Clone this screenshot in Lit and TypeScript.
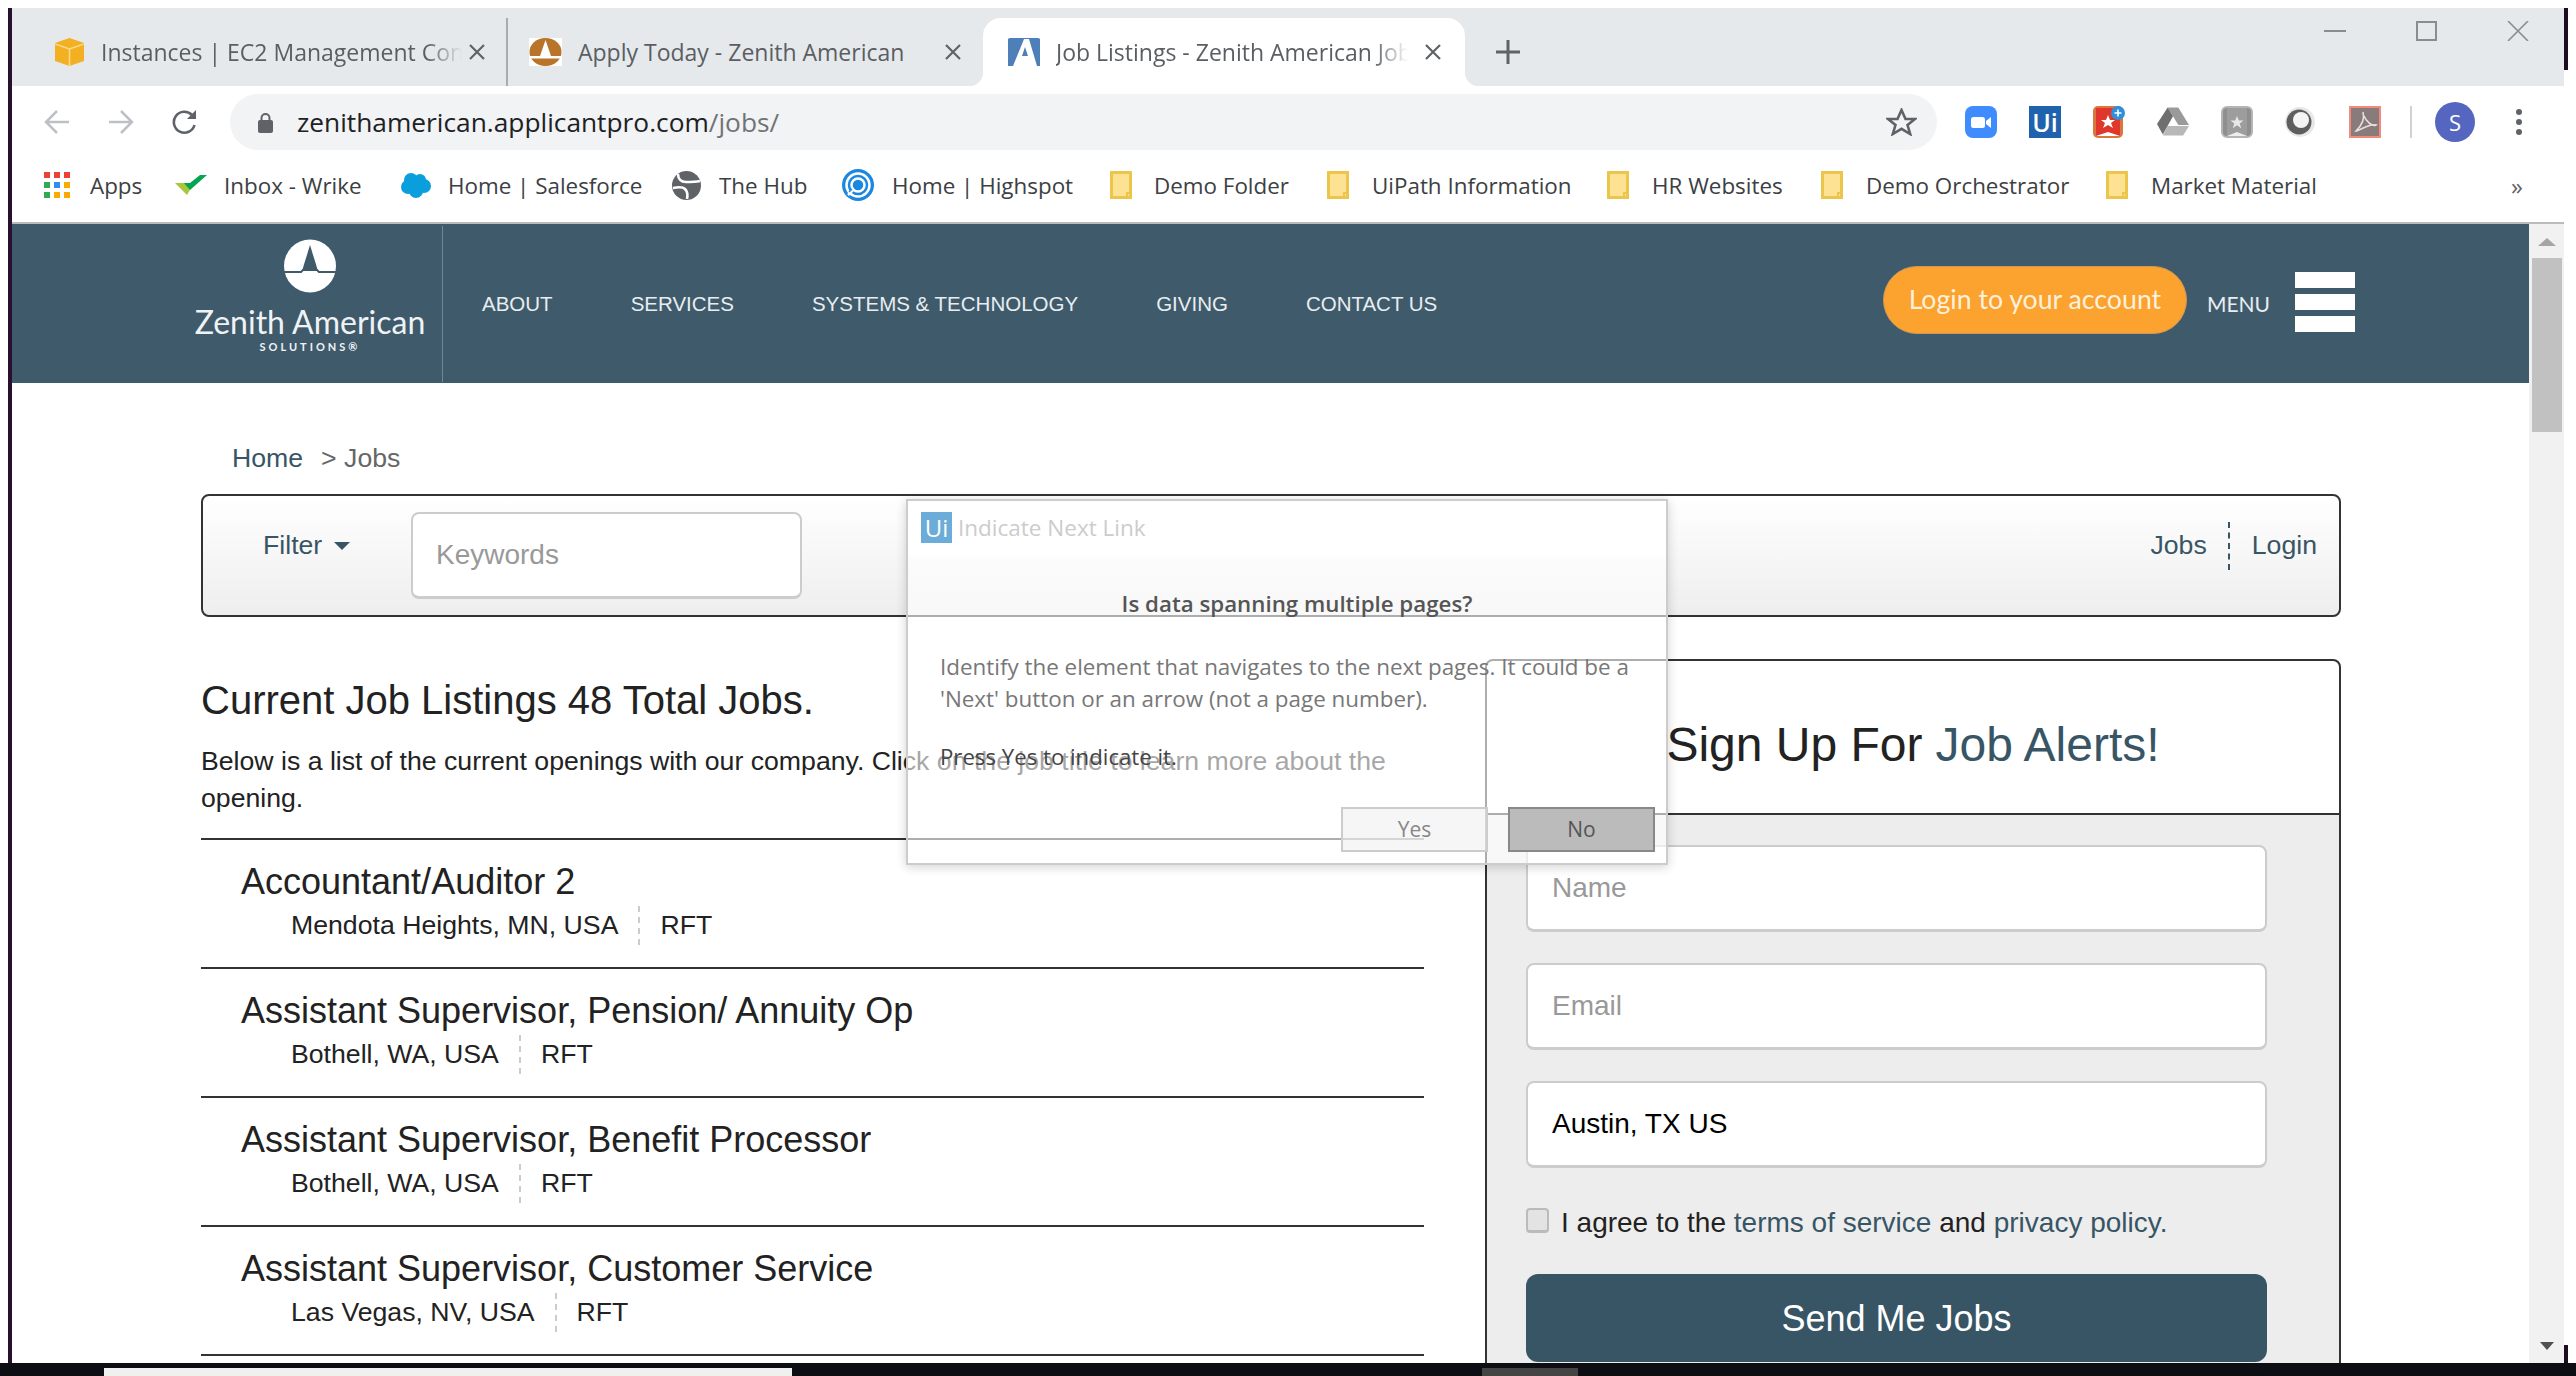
import { LitElement, css, html, svg } from 'lit';
import { customElement } from 'lit/decorators.js';

const folder = html`<svg width="22" height="28" viewBox="0 0 22 28"><path d="M1.5 1.5h19v25h-19z" fill="#fde293" stroke="#ecc64a" stroke-width="3"/><path d="M17 27v-5h3" fill="none" stroke="#ecc64a" stroke-width="2"/></svg>`;

const appsGrid = html`<svg width="26" height="26" viewBox="0 0 26 26">
  ${[
    ['#ea4335', '#ea4335', '#ea4335'],
    ['#34a853', '#2f8cf0', '#f9ab00'],
    ['#34a853', '#f9ab00', '#f9ab00'],
  ].map((row, y) => row.map((c, x) => svg`<rect x=${x * 10} y=${y * 10} width="6" height="6" fill=${c} />`))}
</svg>`;

const wrike = html`<svg width="32" height="20" viewBox="0 0 32 20"><path d="M0 8h11l5 5-4 7z" fill="#a8c73b"/><path d="M9 8l6 0 10-8h7L15 15z" fill="#00a650"/></svg>`;
const salesforce = html`<svg width="32" height="28" viewBox="0 0 32 28"><g fill="#0a9fdc"><circle cx="11" cy="9" r="7"/><circle cx="20" cy="9" r="6"/><circle cx="24" cy="15" r="7"/><circle cx="8" cy="16" r="7"/><circle cx="16" cy="20" r="7"/></g></svg>`;
const hub = html`<svg width="29" height="29" viewBox="0 0 29 29"><circle cx="14.500" cy="14.500" r="14.500" fill="#5f6368"/><path d="M6 3c0 5 3 8 8 8 5 0 9 0 14-1M1 17c5-1 10-1 12 1 2 2 3 5 2 10" fill="none" stroke="#fff" stroke-width="2.600"/></svg>`;
const highspot = html`<svg width="32" height="32" viewBox="0 0 32 32"><circle cx="16" cy="16" r="16" fill="#1b87e0"/><circle cx="16" cy="16" r="11.500" fill="none" stroke="#fff" stroke-width="2.500"/><circle cx="16" cy="16" r="6.500" fill="none" stroke="#fff" stroke-width="2.500"/><path d="M11 21l-5 5" stroke="#fff" stroke-width="2.500"/><path d="M10 20l-3 3" stroke="#1b87e0" stroke-width="1.500"/></svg>`;

const zoom = html`<svg width="32" height="32" viewBox="0 0 32 32"><rect width="32" height="32" rx="8" fill="#3f8cff"/><rect x="6" y="11" width="14" height="11" rx="2.5" fill="#fff"/><path d="M21 15l5-4v11l-5-4z" fill="#fff"/></svg>`;
const uiExt = html`<div class="ext-ui">Ui</div>`;
const wunder = html`<svg width="32" height="32" viewBox="0 0 32 32"><rect width="30" height="32" y="0" rx="5" fill="#d9773e"/><rect x="3" y="2" width="24" height="28" fill="#e0362c"/><path d="M15 9l2 5h5l-4 3 2 5-5-3-5 3 2-5-4-3h5z" fill="#fff"/><path d="M3 30l12-4 12 4z" fill="#fff"/><circle cx="25" cy="7" r="7" fill="#2f8fdc"/><path d="M25 3.500v7M21.500 7h7" stroke="#fff" stroke-width="1.600"/></svg>`;
const drive = html`<svg width="33" height="30" viewBox="0 0 33 30"><path d="M11 0h11l11 18h-11z" fill="#9a9a9a"/><path d="M11 0l5.500 9L6 28 0 17z" fill="#6f6f6f"/><path d="M6 29l5-10h22l-6 10z" fill="#b8b8b8"/></svg>`;
const bookmark = html`<svg width="32" height="32" viewBox="0 0 32 32"><rect x="1" y="1" width="30" height="30" rx="5" fill="#8f8f8f" stroke="#b5b5b5" stroke-width="2"/><rect x="6" y="2" width="20" height="28" fill="#9d9d9d"/><path d="M16 10l1.800 4.500h4.700l-3.800 3 1.500 4.700-4.200-3-4.200 3 1.500-4.700-3.800-3h4.700z" fill="#e8e8e8"/><path d="M6 30l10-4 10 4z" fill="#eee"/></svg>`;
const ring = html`<svg width="32" height="32" viewBox="0 0 32 32"><circle cx="15" cy="16" r="15" fill="#e8e8e8"/><circle cx="14" cy="16" r="12.500" fill="#5e5e5e"/><circle cx="16" cy="14" r="8" fill="#f4f4f4"/></svg>`;
const pdf = html`<svg width="32" height="32" viewBox="0 0 32 32"><rect x="1" y="1" width="30" height="30" fill="#8a7b7b" stroke="#f28b7d" stroke-width="2"/><path d="M14 6c2 7-2 14-7 19 3 0 14-8 20-6-4 2-10-4-12-9" fill="none" stroke="#e6e0e0" stroke-width="1.600"/></svg>`;

const tabClose = html`<svg class="tab-x" width="18" height="16" viewBox="0 0 18 16"><path d="M2 1l14 14M16 1 2 15" stroke="#5f6368" stroke-width="2.200"/></svg>`;

const tabs = [
  {
    cls: 'tab-a',
    title: 'Instances | EC2 Management Console',
    icon: html`<svg width="29" height="28" viewBox="0 0 29 28"><path d="M14.500 0 29 5v18l-14.500 5L0 23V5z" fill="#f4b023"/><path d="M0 6l14.500 5L29 6M14.500 11v17" fill="none" stroke="#fbd98a" stroke-width="1.500"/></svg>`,
  },
  {
    cls: 'tab-b',
    title: 'Apply Today - Zenith American',
    icon: html`<svg width="33" height="28" viewBox="0 0 33 28"><rect width="33" height="28" fill="#fff"/><ellipse cx="16.500" cy="14" rx="16" ry="14" fill="#b87428"/><path d="M16.500 2 22 18H11z" fill="#fff"/><rect y="18" width="33" height="2.500" fill="#fff"/></svg>`,
  },
  {
    cls: 'tab-c',
    title: 'Job Listings - Zenith American Job Listings',
    icon: html`<svg width="32" height="28" viewBox="0 0 32 28"><rect width="32" height="28" rx="2" fill="#4f7fb8"/><path d="M16 1h5l8 27H5z" fill="#fff"/><path d="M17 9l3 9h-6z" fill="#4f7fb8"/><path d="M4 28 14 1H0v27zM30 28 22 1h10v27z" fill="#4f7fb8"/></svg>`,
  },
];

const extensions = [zoom, uiExt, wunder, drive, bookmark, ring, pdf];

// x is the left edge of the item in the window, offset is where its label starts
const bookmarks = [
  { x: 44, offset: 46, label: 'Apps', icon: appsGrid },
  { x: 175, offset: 49, label: 'Inbox - Wrike', icon: wrike },
  { x: 400, offset: 48, label: 'Home | Salesforce', icon: salesforce },
  { x: 672, offset: 47, label: 'The Hub', icon: hub },
  { x: 842, offset: 50, label: 'Home | Highspot', icon: highspot },
  { x: 1110, offset: 44, label: 'Demo Folder', icon: folder },
  { x: 1327, offset: 45, label: 'UiPath Information', icon: folder },
  { x: 1607, offset: 45, label: 'HR Websites', icon: folder },
  { x: 1821, offset: 45, label: 'Demo Orchestrator', icon: folder },
  { x: 2106, offset: 45, label: 'Market Material', icon: folder },
];

const navLinks = ['ABOUT', 'SERVICES', 'SYSTEMS & TECHNOLOGY', 'GIVING', 'CONTACT US'];

const jobs = [
  { title: 'Accountant/Auditor 2', place: 'Mendota Heights, MN, USA' },
  { title: 'Assistant Supervisor, Pension/ Annuity Op', place: 'Bothell, WA, USA' },
  { title: 'Assistant Supervisor, Benefit Processor', place: 'Bothell, WA, USA' },
  { title: 'Assistant Supervisor, Customer Service', place: 'Las Vegas, NV, USA' },
];

@customElement('app-root')
export class AppRoot extends LitElement {
  static override styles = css`
    :host {
      display: block;
      width: 2576px;
      height: 1376px;
      overflow: hidden;
      font-family: 'Liberation Sans', Arial, sans-serif;
      color: #222;
    }

    .screen {
      position: relative;
      display: flex;
      flex-direction: column;
      height: 100%;
      background: #fff;
    }

    .top-strip {
      flex: 0 0 8px;
      background: #fff;
    }

    .middle {
      flex: 1 1 auto;
      min-height: 0;
      display: flex;
    }

    .edge-left {
      flex: 0 0 12px;
      box-sizing: border-box;
      background: #fff;
      border-left: 8px solid #fff;
      border-right: 4px solid #2a1030;
    }

    .edge-right {
      flex: 0 0 12px;
      display: flex;
      flex-direction: column;
      background: #fff;
    }

    .edge-right i {
      display: block;
      width: 4px;
      height: 62px;
      background: #1c0d20;
    }

    .edge-right i:last-child {
      height: 18px;
      margin-top: auto;
    }

    .window {
      flex: 1 1 auto;
      min-width: 0;
      display: flex;
      flex-direction: column;
      background: #fff;
    }

    .taskbar {
      flex: 0 0 13px;
      display: flex;
      background: #0c0e13;
    }

    .task-a,
    .task-b {
      height: 8px;
      margin-top: 5px;
    }

    .task-a {
      width: 688px;
      margin-left: 104px;
      background: #f0f0f0;
    }

    .task-b {
      width: 96px;
      margin-left: 690px;
      background: #444;
    }

    /* tab strip */
    .tabstrip {
      flex: 0 0 78px;
      display: flex;
      align-items: flex-end;
      background: #e6e9ec;
      font-family: 'Open Sans', sans-serif;
      font-size: 23px;
      color: #5a5e63;
    }

    .tab {
      position: relative;
      box-sizing: border-box;
      height: 68px;
      display: flex;
      align-items: center;
    }

    .tab svg {
      flex: none;
    }

    .tab-title {
      overflow: hidden;
      white-space: nowrap;
      -webkit-mask-image: linear-gradient(to right, #000 90%, transparent);
      mask-image: linear-gradient(to right, #000 90%, transparent);
    }

    .tab-a {
      width: 496px;
      padding-left: 43px;
      border-right: 2px solid #a9acaf;
    }

    .tab-a .tab-title {
      width: 361px;
      margin: 0 6px 0 17px;
    }

    .tab-b {
      width: 475px;
      padding-left: 21px;
    }

    .tab-b .tab-title {
      width: 360px;
      margin: 0 6px 0 16px;
      -webkit-mask-image: none;
      mask-image: none;
    }

    .tab-c {
      width: 482px;
      padding-left: 25px;
      background: #fff;
      border-radius: 18px 18px 0 0;
    }

    .tab-c .tab-title {
      width: 352px;
      margin: 0 16px 0 16px;
    }

    .tab-c::before,
    .tab-c::after {
      content: '';
      position: absolute;
      bottom: 0;
      width: 14px;
      height: 14px;
    }

    .tab-c::before {
      left: -14px;
      background: radial-gradient(circle at 0 0, #e6e9ec 14px, #fff 14.5px);
    }

    .tab-c::after {
      right: -14px;
      background: radial-gradient(circle at 100% 0, #e6e9ec 14px, #fff 14.5px);
    }

    .new-tab {
      flex: none;
      margin: 0 0 22px 31px;
    }

    .win-controls {
      align-self: flex-start;
      display: flex;
      gap: 70px;
      margin: 13px 35px 0 auto;
    }

    /* toolbar */
    .toolbar {
      flex: 0 0 76px;
      box-sizing: border-box;
      display: flex;
      align-items: center;
      height: 76px;
      padding: 0 0 4px 32px;
    }

    .nav-arrow {
      flex: none;
      margin-right: 38px;
    }

    .reload {
      flex: none;
      margin-right: 33px;
    }

    .address {
      flex: 0 0 1707px;
      height: 56px;
      box-sizing: border-box;
      display: flex;
      align-items: center;
      padding: 0 20px 0 28px;
      background: #f1f3f4;
      border-radius: 28px;
    }

    .url {
      flex: 1 1 auto;
      margin-left: 24px;
      font-family: 'Open Sans', sans-serif;
      font-size: 26.300px;
      color: #202124;
    }

    .url span {
      color: #6f7377;
    }

    .extensions {
      display: flex;
      align-items: center;
      gap: 32px;
      margin-left: 28px;
    }

    .extensions > * {
      flex: none;
      width: 32px;
      display: flex;
      justify-content: center;
    }

    .ext-ui {
      box-sizing: border-box;
      height: 32px;
      background: #1f63ae;
      color: #fff;
      font: 600 25px/32px 'Open Sans', sans-serif;
      text-align: center;
    }

    .tool-sep {
      flex: none;
      width: 2px;
      height: 32px;
      margin-left: 29px;
      background: #cfd1d3;
    }

    .avatar {
      flex: none;
      width: 40px;
      height: 40px;
      margin-left: 23px;
      border-radius: 50%;
      background: #5566c0;
      color: #fff;
      font: 22px/40px 'Open Sans', sans-serif;
      text-align: center;
    }

    .kebab {
      flex: none;
      margin-left: 41px;
    }

    /* bookmarks */
    .bookmarks {
      flex: 0 0 62px;
      box-sizing: border-box;
      display: flex;
      align-items: center;
      padding: 0 0 14px 32px;
      font-family: 'Open Sans', sans-serif;
      font-size: 22.400px;
      color: #3c4043;
      border-bottom: 2px solid #bbb;
      white-space: nowrap;
    }

    .bm {
      flex: none;
      display: flex;
      align-items: center;
    }

    .bm-icon {
      flex: none;
      display: flex;
    }

    .bm-more {
      flex: none;
      font-size: 24px;
      margin-left: 6px;
      color: #5f6368;
    }

    /* page */
    .page {
      flex: 1 1 auto;
      min-height: 0;
      display: flex;
    }

    .content {
      flex: 1 1 auto;
      min-width: 0;
      overflow: hidden;
    }

    .scrollbar {
      flex: 0 0 35px;
      display: flex;
      flex-direction: column;
      align-items: center;
      background: #f1f1f1;
    }

    .scroll-up {
      margin-top: 14px;
    }

    .scroll-thumb {
      width: 30px;
      height: 174px;
      margin-top: 12px;
      background: #c1c1c1;
    }

    .scroll-down {
      margin-top: auto;
      margin-bottom: 13px;
    }

    .site-header {
      height: 159px;
      box-sizing: border-box;
      display: flex;
      align-items: center;
      padding: 0 174px 0 183px;
      background: #3f5b6b;
      color: #e8edf0;
    }

    .logo {
      flex: 0 0 230px;
      min-width: 0;
      align-self: flex-start;
      padding-top: 15px;
      display: flex;
      flex-direction: column;
      align-items: center;
      color: #f0f3f5;
    }

    .logo-name {
      font: 400 32px/40px Lato, sans-serif;
      white-space: nowrap;
      margin-top: 9px;
    }

    .logo-sub {
      font: 700 11px/14px Lato, sans-serif;
      letter-spacing: 3px;
      margin-top: -2px;
    }

    .header-rule {
      flex: none;
      width: 1px;
      height: 156px;
      margin-left: 17px;
      background: #6f8694;
    }

    .site-nav {
      display: flex;
      gap: 78px;
      margin-left: 39px;
      font-size: 20.500px;
      white-space: nowrap;
    }

    .login-pill {
      flex: none;
      width: 304px;
      height: 68px;
      box-sizing: border-box;
      margin: -7px 0 0 auto;
      border: 1px solid #c9975a;
      border-radius: 34px;
      background: #fca22e;
      color: #fdf1dd;
      font: 26.700px/64px Lato, sans-serif;
      text-align: center;
    }

    .menu-label {
      flex: none;
      margin-left: 20px;
      font: 21px/26px Lato, sans-serif;
    }

    .burger {
      flex: none;
      display: flex;
      flex-direction: column;
      gap: 6px;
      margin: -3px 0 0 25px;
    }

    .burger i {
      display: block;
      width: 60px;
      height: 16px;
      background: #fff;
    }

    .main {
      padding: 57px 188px 0 189px;
    }

    .crumbs {
      padding-left: 31px;
      font-size: 26.670px;
      line-height: 37px;
      color: #385565;
    }

    .crumbs span {
      margin-left: 18px;
      color: #666;
    }

    .filter-bar {
      box-sizing: border-box;
      height: 123px;
      margin-top: 17px;
      display: flex;
      align-items: center;
      padding: 0 22px 0 60px;
      border: 2px solid #333;
      border-radius: 8px;
      background: linear-gradient(#fff, #eee);
      font-size: 26.670px;
      color: #385565;
    }

    .filter {
      flex: 0 0 148px;
      display: flex;
      align-items: center;
      gap: 12px;
      margin-top: -20px;
    }

    .caret {
      width: 0;
      height: 0;
      border: 8px solid transparent;
      border-top-color: #385565;
      border-bottom: 0;
    }

    .field {
      box-sizing: border-box;
      display: flex;
      align-items: center;
      background: #fff;
      border: 2px solid #ccc;
      border-bottom-width: 3px;
      border-radius: 8px;
      font-size: 28px;
      color: #999;
    }

    .field.keywords {
      width: 391px;
      height: 87px;
      padding-left: 23px;
    }

    .bar-links {
      display: flex;
      align-items: center;
      margin: -20px 0 0 auto;
    }

    .bar-links i {
      width: 0;
      height: 48px;
      margin: 0 22px 0 21px;
      border-left: 2px dashed #385565;
    }

    .columns {
      display: flex;
      gap: 61px;
      margin-top: 42px;
    }

    .listing {
      flex: 0 0 1223px;
    }

    .listing h1 {
      margin: 18px 0 20px;
      font-size: 40px;
      font-weight: 400;
      line-height: 46px;
    }

    .listing p {
      margin: 0 0 21px;
      font-size: 26.670px;
      line-height: 37px;
    }

    .job {
      box-sizing: border-box;
      height: 129px;
      padding: 18px 0 0 40px;
      border-top: 2px solid #333;
    }

    .job:last-child {
      height: 131px;
      border-bottom: 2px solid #333;
    }

    .job h2 {
      margin: 0;
      font-size: 36px;
      font-weight: 400;
      line-height: 48px;
    }

    .job-meta {
      display: flex;
      align-items: center;
      height: 39px;
      padding-left: 50px;
      font-size: 26.670px;
    }

    .job-meta span {
      line-height: 39px;
    }

    .job-meta .place {
      padding-right: 20px;
      border-right: 2px dashed #ccc;
    }

    .job-meta .kind {
      padding-left: 20px;
    }

    .signup {
      flex: 0 0 856px;
      box-sizing: border-box;
      border: 2px solid #333;
      border-radius: 8px 8px 0 0;
    }

    .signup-head {
      height: 154px;
      box-sizing: border-box;
      display: flex;
      align-items: center;
      justify-content: center;
      padding-top: 15px;
      border-bottom: 2px solid #333;
      font-size: 48px;
    }

    .signup-head span {
      color: #385565;
      margin-left: 0.270em;
    }

    .signup-body {
      display: flex;
      flex-direction: column;
      height: 700px;
      padding: 30px 72px 0 39px;
      background: #ededed;
    }

    .signup-body .field {
      height: 87px;
      padding-left: 24px;
      margin-bottom: 31px;
      flex: none;
    }

    .signup-body .field.filled {
      color: #000;
    }

    .agree {
      flex: none;
      display: flex;
      align-items: center;
      height: 37px;
      margin-top: 5px;
      font-size: 28px;
    }

    .check {
      flex: none;
      box-sizing: border-box;
      width: 23px;
      height: 25px;
      margin: -4px 12px 0 0;
      background: #e3e3e3;
      border: 2px solid #bbb;
      border-bottom-width: 3px;
      border-radius: 4px;
    }

    .agree span {
      color: #385565;
    }

    .send {
      flex: none;
      height: 88px;
      margin-top: 33px;
      border-radius: 12px;
      background: #385565;
      color: #fff;
      font-size: 36px;
      line-height: 90px;
      text-align: center;
    }

    /* translucent robot dialog lying over the page */
    .dialog {
      position: absolute;
      left: 906px;
      top: 499px;
      width: 762px;
      height: 366px;
      box-sizing: border-box;
      padding: 11px 11px 0 13px;
      border: 2px solid #ccc;
      background: linear-gradient(rgba(255, 255, 255, 0.98) 54px, rgba(255, 255, 255, 0.6) 60px);
      box-shadow: 0 2px 10px rgba(0, 0, 0, 0.18);
      font-family: 'Open Sans', sans-serif;
    }

    .dialog-title {
      display: flex;
      align-items: center;
      gap: 6px;
      height: 31px;
      color: #ccc;
      font-size: 22.500px;
    }

    .dialog-title b {
      width: 31px;
      height: 31px;
      background: #6cacd8;
      color: #fff;
      font-weight: 400;
      font-size: 24px;
      line-height: 31px;
      text-align: center;
    }

    .dialog h3 {
      margin: 45px 0 0;
      padding-left: 18px;
      font-size: 22.300px;
      font-weight: 600;
      line-height: 32px;
      color: #555;
      text-align: center;
    }

    .dialog-copy {
      margin: 31px 0 0 19px;
      font-size: 22.400px;
      line-height: 32px;
      color: #777;
    }

    .dialog-press {
      margin: 26px 0 0 19px;
      font-size: 22.200px;
      line-height: 32px;
      color: #444;
    }

    .dialog-actions {
      display: flex;
      justify-content: flex-end;
      gap: 20px;
      margin: 34px 0 0;
    }

    .dialog-actions div {
      box-sizing: border-box;
      width: 147px;
      height: 45px;
      border: 2px solid #ccc;
      background: rgba(240, 240, 240, 0.6);
      color: #888;
      font-size: 21px;
      line-height: 41px;
      text-align: center;
    }

    .dialog-actions .active {
      border-color: #888;
      background: #bbb;
      color: #555;
    }
  `;

  private renderChrome() {
    return html`
      <div class="tabstrip">
        ${tabs.map(
          (t) => html`<div class="tab ${t.cls}">${t.icon}<div class="tab-title">${t.title}</div>${tabClose}</div>`
        )}
        <svg class="new-tab" width="24" height="24" viewBox="0 0 24 24"><path d="M12 0v24M0 12h24" stroke="#5f6368" stroke-width="3"/></svg>
        <div class="win-controls">
          <svg width="22" height="20" viewBox="0 0 22 20"><path d="M0 10h22" stroke="#8a8d90" stroke-width="2"/></svg>
          <svg width="21" height="20" viewBox="0 0 21 20"><rect x="1" y="1" width="19" height="18" fill="none" stroke="#8a8d90" stroke-width="2"/></svg>
          <svg width="22" height="20" viewBox="0 0 22 20"><path d="M1 0l20 20M21 0 1 20" stroke="#8a8d90" stroke-width="1.600"/></svg>
        </div>
      </div>
      <div class="toolbar">
        <svg class="nav-arrow" width="26" height="26" viewBox="0 0 26 26"><path d="M25 13H3M13 2 2 13l11 11" fill="none" stroke="#bdc1c6" stroke-width="2.500"/></svg>
        <svg class="nav-arrow" width="26" height="26" viewBox="0 0 26 26"><path d="M1 13h22M13 2l11 11-11 11" fill="none" stroke="#bdc1c6" stroke-width="2.500"/></svg>
        <svg class="reload" width="25" height="26" viewBox="0 0 25 26"><path d="M20 6a10.500 10.500 0 1 0 2.500 10" fill="none" stroke="#5f6368" stroke-width="2.600"/><path d="M24 1v9h-9z" fill="#5f6368"/></svg>
        <div class="address">
          <svg width="15" height="21" viewBox="0 0 15 21"><path d="M3.500 9V6a4 4 0 0 1 8 0v3" fill="none" stroke="#5f6368" stroke-width="2"/><rect y="8" width="15" height="13" rx="2" fill="#5f6368"/></svg>
          <div class="url">zenithamerican.applicantpro.com<span>/jobs/</span></div>
          <svg width="31" height="28" viewBox="0 0 31 28"><path d="M15.500 2l4 9h9.500l-7.500 6 2.700 9-8.700-5.200L6.800 26l2.700-9L2 11h9.500z" fill="none" stroke="#5f6368" stroke-width="2.600"/></svg>
        </div>
        <div class="extensions">${extensions}</div>
        <div class="tool-sep"></div>
        <div class="avatar">S</div>
        <svg class="kebab" width="6" height="26" viewBox="0 0 6 26"><circle cx="3" cy="3" r="3" fill="#5f6368"/><circle cx="3" cy="13" r="3" fill="#5f6368"/><circle cx="3" cy="23" r="3" fill="#5f6368"/></svg>
      </div>
      <div class="bookmarks">
        ${bookmarks.map((b, i) => {
          const next = i + 1 < bookmarks.length ? bookmarks[i + 1].x : 2505;
          return html`<div class="bm" style="width:${next - b.x}px">
            <div class="bm-icon" style="width:${b.offset}px">${b.icon}</div>${b.label}
          </div>`;
        })}
        <div class="bm-more">»</div>
      </div>
    `;
  }

  private renderHeader() {
    return html`
      <header class="site-header">
        <div class="logo">
          <svg width="52" height="54" viewBox="0 0 52 54">
            <ellipse cx="26" cy="27" rx="26" ry="26.500" fill="#fff"/>
            <path d="M26 6l8 26H18z" fill="#3f5b6b"/>
            <path d="M0 33h17l2-2h14l2 2h17" fill="none" stroke="#3f5b6b" stroke-width="2"/>
          </svg>
          <div class="logo-name">Zenith American</div>
          <div class="logo-sub">SOLUTIONS®</div>
        </div>
        <div class="header-rule"></div>
        <nav class="site-nav">${navLinks.map((n) => html`<span>${n}</span>`)}</nav>
        <div class="login-pill">Login to your account</div>
        <div class="menu-label">MENU</div>
        <div class="burger"><i></i><i></i><i></i></div>
      </header>
    `;
  }

  private renderListing() {
    return html`
      <section class="listing">
        <h1>Current Job Listings 48 Total Jobs.</h1>
        <p>Below is a list of the current openings with our company. Click on the job title to learn more about the opening.</p>
        ${jobs.map(
          (j) => html`<div class="job">
            <h2>${j.title}</h2>
            <div class="job-meta"><span class="place">${j.place}</span><span class="kind">RFT</span></div>
          </div>`
        )}
      </section>
    `;
  }

  private renderSignup() {
    return html`
      <aside class="signup">
        <div class="signup-head">Sign Up For<span>Job Alerts!</span></div>
        <div class="signup-body">
          <div class="field">Name</div>
          <div class="field">Email</div>
          <div class="field filled">Austin, TX US</div>
          <div class="agree"><div class="check"></div>I agree to the&nbsp;<span>terms of service</span>&nbsp;and&nbsp;<span>privacy policy.</span></div>
          <div class="send">Send Me Jobs</div>
        </div>
      </aside>
    `;
  }

  override render() {
    return html`
      <div class="screen">
        <div class="top-strip"></div>
        <div class="middle">
          <div class="edge-left"></div>
          <div class="window">
            ${this.renderChrome()}
            <div class="page">
              <div class="content">
                ${this.renderHeader()}
                <div class="main">
                  <div class="crumbs">Home<span>&gt; Jobs</span></div>
                  <div class="filter-bar">
                    <div class="filter">Filter <div class="caret"></div></div>
                    <div class="field keywords">Keywords</div>
                    <div class="bar-links">Jobs<i></i>Login</div>
                  </div>
                  <div class="columns">${this.renderListing()}${this.renderSignup()}</div>
                </div>
              </div>
              <div class="scrollbar">
                <svg class="scroll-up" width="18" height="8" viewBox="0 0 18 8"><path d="M9 0l9 8H0z" fill="#a5a5a5"/></svg>
                <div class="scroll-thumb"></div>
                <svg class="scroll-down" width="14" height="8" viewBox="0 0 14 8"><path d="M0 0h14L7 8z" fill="#505050"/></svg>
              </div>
            </div>
          </div>
          <div class="edge-right"><i></i><i></i></div>
        </div>
        <div class="taskbar"><div class="task-a"></div><div class="task-b"></div></div>
        <div class="dialog">
          <div class="dialog-title"><b>Ui</b>Indicate Next Link</div>
          <h3>Is data spanning multiple pages?</h3>
          <div class="dialog-copy">Identify the element that navigates to the next pages. It could be a<br />'Next' button or an arrow (not a page number).</div>
          <div class="dialog-press">Press Yes to indicate it.</div>
          <div class="dialog-actions"><div>Yes</div><div class="active">No</div></div>
        </div>
      </div>
    `;
  }
}

declare global {
  interface HTMLElementTagNameMap {
    'app-root': AppRoot;
  }
}
